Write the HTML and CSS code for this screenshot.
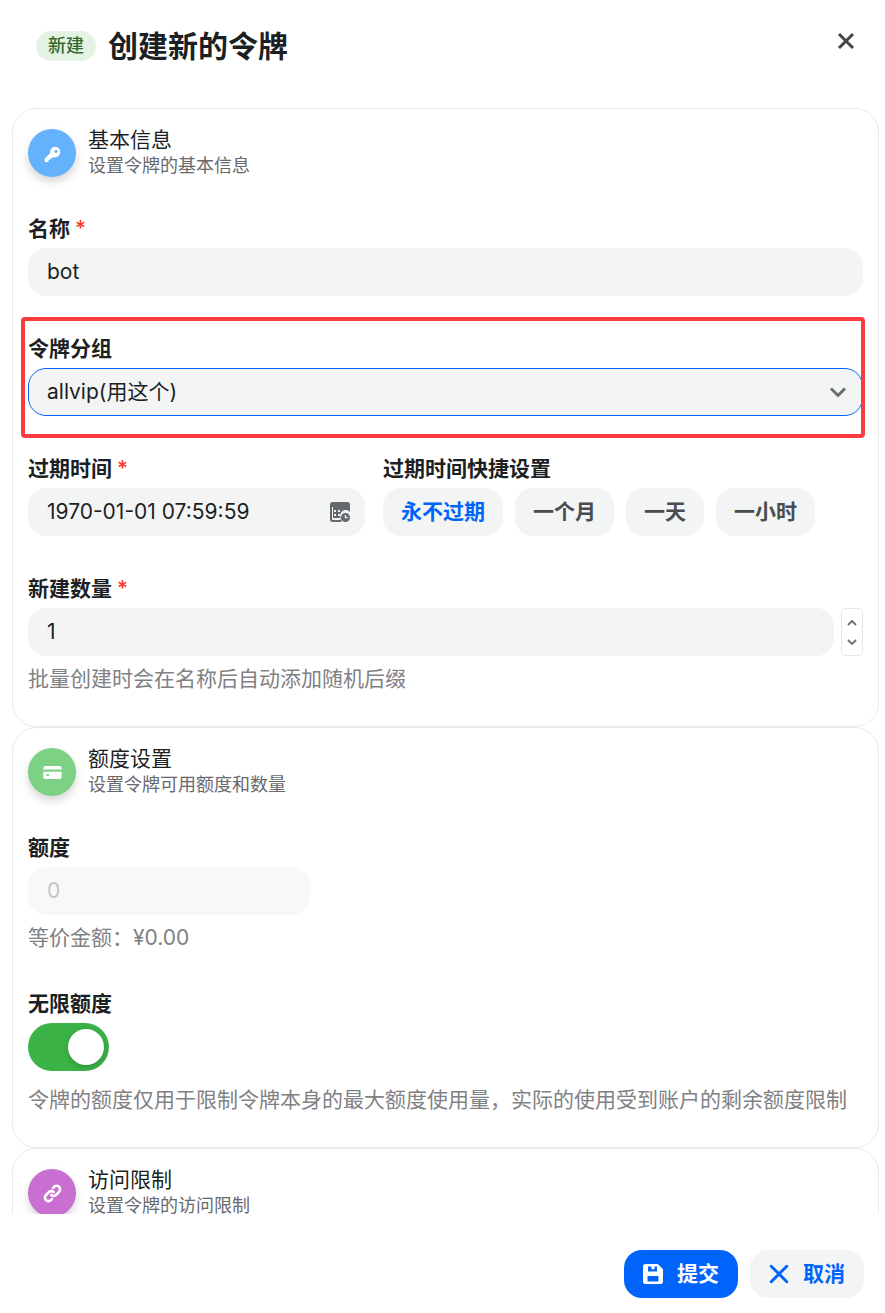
FILE: index.html
```html
<!DOCTYPE html>
<html lang="en">
<head>
    <meta charset="UTF-8">
    <meta name="viewport" content="width=device-width, initial-scale=1.0">
    <title>创建新的令牌</title>
    <link rel="stylesheet" href="styles.css">
</head>
<body>
    <div class="sheet">
        <header class="sheet-header">
            <span class="tag">新建</span>
            <h1 class="sheet-title">创建新的令牌</h1>
            <svg class="close-icon" viewBox="0 0 18 18"><path d="M2 2L16 16M16 2L2 16"/></svg>
        </header>

        <main class="sheet-body">
            <section class="card">
                <div class="card-head">
                    <span class="avatar avatar-blue">
                        <svg viewBox="0 0 24 24" class="avatar-icon"><path fill-rule="evenodd" d="M15 4.2a6 6 0 1 1-1.9 11.7l-1.6 1.6h-2v2h-2v2.1H3.8a.9.9 0 0 1-.9-.9v-2.3c0-.3.1-.5.3-.7l6.2-6.2A6 6 0 0 1 15 4.2zm1 3.4a1.9 1.9 0 1 0 0 3.8 1.9 1.9 0 0 0 0-3.8z"/></svg>
                    </span>
                    <div>
                        <div class="card-title">基本信息</div>
                        <div class="card-sub">设置令牌的基本信息</div>
                    </div>
                </div>

                <div class="field">
                    <label class="field-label">名称 <span class="required">*</span></label>
                    <div class="input">bot</div>
                </div>

                <div class="field field-marked">
                    <label class="field-label">令牌分组</label>
                    <div class="input input-select">
                        allvip(用这个)
                        <svg class="select-arrow" viewBox="0 0 18 12"><path d="M2 2.5L9 9.5L16 2.5"/></svg>
                    </div>
                    <div class="marker"></div>
                </div>

                <div class="field-row">
                    <div class="field field-date">
                        <label class="field-label">过期时间 <span class="required">*</span></label>
                        <div class="input input-date">
                            1970-01-01 07:59:59
                            <svg class="date-icon" viewBox="0 0 20 20">
                                <path fill-rule="evenodd" d="M2.5 0h15A2.5 2.5 0 0 1 20 2.5V10a5.5 5.5 0 0 0-8.5 7.5V20h-9A2.5 2.5 0 0 1 0 17.5v-15A2.5 2.5 0 0 1 2.5 0zM2 5v12.500a.5.5 0 0 0 .5.5h8a6 6 0 0 1 .3-2H3V5zm2 3v2h2V8zm4 0v2h2V8zm-4 4v2h2v-2zm4 0v2h2v-2z"/>
                                <path fill-rule="evenodd" d="M15.500 11a4.500 4.500 0 1 1 0 9 4.500 4.500 0 0 1 0-9zm-.7 2v3.200h2.900v-1.300h-1.600V13z"/>
                            </svg>
                        </div>
                    </div>
                    <div class="field">
                        <label class="field-label">过期时间快捷设置</label>
                        <div class="quick-list">
                            <span class="quick-btn quick-btn-active">永不过期</span>
                            <span class="quick-btn">一个月</span>
                            <span class="quick-btn">一天</span>
                            <span class="quick-btn">一小时</span>
                        </div>
                    </div>
                </div>

                <div class="field">
                    <label class="field-label">新建数量 <span class="required">*</span></label>
                    <div class="number-row">
                        <div class="input input-grow">1</div>
                        <div class="spinner">
                            <svg viewBox="0 0 12 8"><path d="M2 6L6 2L10 6"/></svg>
                            <svg viewBox="0 0 12 8"><path d="M2 2L6 6L10 2"/></svg>
                        </div>
                    </div>
                    <div class="helper">批量创建时会在名称后自动添加随机后缀</div>
                </div>
            </section>

            <section class="card">
                <div class="card-head">
                    <span class="avatar avatar-green">
                        <svg viewBox="0 0 24 24" class="avatar-icon"><path fill-rule="evenodd" d="M4 4.500h16a2.500 2.500 0 0 1 2.500 2.500v1.500h-21V7A2.500 2.500 0 0 1 4 4.500zm-2.500 6.500h21v6a2.500 2.500 0 0 1-2.500 2.500H4A2.500 2.500 0 0 1 1.500 17zm3.500 3v2h3v-2z"/></svg>
                    </span>
                    <div>
                        <div class="card-title">额度设置</div>
                        <div class="card-sub">设置令牌可用额度和数量</div>
                    </div>
                </div>

                <div class="field">
                    <label class="field-label">额度</label>
                    <div class="input input-disabled">0</div>
                    <div class="helper">等价金额：¥0.00</div>
                </div>

                <div class="field field-tight">
                    <label class="field-label">无限额度</label>
                    <div class="switch"><span class="switch-knob"></span></div>
                    <div class="helper helper-wide">令牌的额度仅用于限制令牌本身的最大额度使用量，实际的使用受到账户的剩余额度限制</div>
                </div>
            </section>

            <section class="card">
                <div class="card-head">
                    <span class="avatar avatar-purple">
                        <svg viewBox="0 0 24 24" class="avatar-icon avatar-icon-line"><path d="M10.500 13.500a4 4 0 0 0 5.700 0l3.300-3.300a4 4 0 0 0-5.700-5.700l-1.300 1.300"/><path d="M13.500 10.500a4 4 0 0 0-5.700 0l-3.300 3.300a4 4 0 0 0 5.700 5.700l1.300-1.300"/></svg>
                    </span>
                    <div>
                        <div class="card-title">访问限制</div>
                        <div class="card-sub">设置令牌的访问限制</div>
                    </div>
                </div>
            </section>
        </main>

        <footer class="sheet-footer">
            <span class="btn btn-primary">
                <svg viewBox="0 0 20 20" class="btn-icon"><path fill="currentColor" fill-rule="evenodd" d="M2.500 0h12.300L20 5.200v12.300a2.500 2.500 0 0 1-2.500 2.500h-15A2.500 2.500 0 0 1 0 17.500v-15A2.500 2.500 0 0 1 2.500 0zM5 2.500v5h9v-5h-2.500v2.700H8.500V2.500zM4.500 12v5.500h11V12z"/></svg>
                提交
            </span>
            <span class="btn btn-light">
                <svg viewBox="0 0 18 18" class="btn-icon"><path fill="none" stroke="currentColor" stroke-width="2.600" stroke-linecap="round" d="M2 2L16 16M16 2L2 16"/></svg>
                取消
            </span>
        </footer>
    </div>
</body>
</html>
```

FILE: styles.css
```css
* {
    box-sizing: border-box;
}

body {
    margin: 0;
    background-color: #fff;
    color: #1c1f23;
    font-family: Inter, "Noto Sans CJK SC", sans-serif;
    font-size: 21px;
    line-height: 30px;
}

.sheet {
    display: flex;
    flex-direction: column;
    width: 885px;
    height: 1313px;
    overflow: hidden;
}

.sheet-header {
    display: flex;
    align-items: center;
    height: 108px;
    flex-shrink: 0;
    padding: 0 30px 16px 36px;
}

.tag {
    width: 60px;
    height: 30px;
    border-radius: 15px;
    background-color: #e4f3e3;
    color: #2f6a2f;
    font-size: 18px;
    font-weight: 500;
    line-height: 30px;
    text-align: center;
}

.sheet-title {
    margin: 0 0 0 12px;
    font-size: 30px;
    font-weight: 700;
    line-height: 40px;
}

.close-icon {
    width: 18px;
    height: 18px;
    margin-left: auto;
    margin-bottom: 10px;
    fill: none;
    stroke: #43474c;
    stroke-width: 3;
}

.sheet-body {
    height: 1106px;
    flex-shrink: 0;
    overflow: hidden;
    padding: 0 6px 0 12px;
}

.card {
    padding: 18px 15px 32px;
    border: 1px solid #ebebec;
    border-radius: 24px;
    background-color: #fff;
}

.card-head {
    display: flex;
    align-items: center;
    gap: 12px;
    margin-bottom: 35px;
}

.avatar {
    display: flex;
    align-items: center;
    justify-content: center;
    width: 48px;
    height: 48px;
    border-radius: 50%;
    box-shadow: 0 5px 10px rgba(0, 0, 0, 0.16);
}

.avatar-blue {
    background-color: #65b2fc;
}

.avatar-green {
    background-color: #7dd185;
}

.avatar-purple {
    background-color: #c96fd1;
}

.avatar-icon {
    width: 21px;
    height: 21px;
    fill: #fff;
}

.avatar-icon-line {
    fill: none;
    stroke: #fff;
    stroke-width: 3;
    stroke-linecap: round;
}

.card-title {
    font-size: 21px;
    line-height: 26px;
}

.card-sub {
    font-size: 18px;
    line-height: 26px;
    color: #68696c;
}

.field {
    margin-bottom: 38px;
}

.field:last-child {
    margin-bottom: 0;
}

.field-marked {
    position: relative;
}

.field-tight {
    margin-top: -2px;
}

.field-label {
    display: block;
    margin-bottom: 4px;
    font-weight: 700;
}

.required {
    color: #f93920;
    font-weight: 500;
}

.input {
    display: flex;
    align-items: center;
    height: 48px;
    padding: 0 19px;
    border-radius: 18px;
    background-color: #f3f5f5;
}

.input-select {
    justify-content: space-between;
    border: 1px solid #0064fa;
    padding: 0 18px;
}

.select-arrow {
    width: 18px;
    height: 12px;
    margin-right: -3px;
    fill: none;
    stroke: #6b6e71;
    stroke-width: 3;
}

.marker {
    position: absolute;
    top: -17px;
    left: -7px;
    right: -2px;
    bottom: -22px;
    border: 4px solid #fb3b40;
    border-radius: 4px;
}

.field-row {
    display: flex;
    gap: 18px;
}

.field-date {
    width: 337px;
    flex-shrink: 0;
}

.input-date {
    justify-content: space-between;
    padding-right: 15px;
}

.date-icon {
    width: 20px;
    height: 20px;
    fill: #65686c;
}

.quick-list {
    display: flex;
    gap: 12px;
}

.quick-btn {
    display: flex;
    align-items: center;
    height: 48px;
    padding: 0 18px;
    border-radius: 18px;
    background-color: #f3f5f5;
    color: #4a4d50;
    font-weight: 700;
}

.quick-btn-active {
    color: #0064fa;
}

.number-row {
    display: flex;
    gap: 7px;
}

.input-grow {
    flex-grow: 1;
}

.spinner {
    display: flex;
    flex-direction: column;
    align-items: center;
    justify-content: space-around;
    width: 22px;
    padding: 4px 0;
    border: 1px solid #e6e7e8;
    border-radius: 5px;
}

.spinner svg {
    width: 12px;
    height: 8px;
    fill: none;
    stroke: #6b6e71;
    stroke-width: 1.800;
}

.helper {
    margin-top: 8px;
    color: #7f8184;
}

.helper-wide {
    margin-top: 14px;
}

.input-disabled {
    width: 282px;
    background-color: #f8f8f8;
    color: #c4c5c6;
}

.switch {
    display: flex;
    align-items: center;
    justify-content: flex-end;
    width: 81px;
    height: 48px;
    padding-right: 5px;
    border-radius: 24px;
    background-color: #3bb346;
}

.switch-knob {
    width: 36px;
    height: 36px;
    border-radius: 50%;
    background-color: #fff;
    box-shadow: 0 2px 6px rgba(0, 0, 0, 0.2);
}

.sheet-footer {
    display: flex;
    justify-content: flex-end;
    gap: 12px;
    padding: 36px 21px 0 0;
}

.btn {
    display: flex;
    align-items: center;
    justify-content: center;
    gap: 14px;
    width: 114px;
    height: 48px;
    border-radius: 18px;
    font-weight: 700;
}

.btn-icon {
    width: 20px;
    height: 20px;
}

.btn-primary {
    background-color: #0064fa;
    color: #fff;
}

.btn-light {
    background-color: #f3f5f5;
    color: #0064fa;
}
```
